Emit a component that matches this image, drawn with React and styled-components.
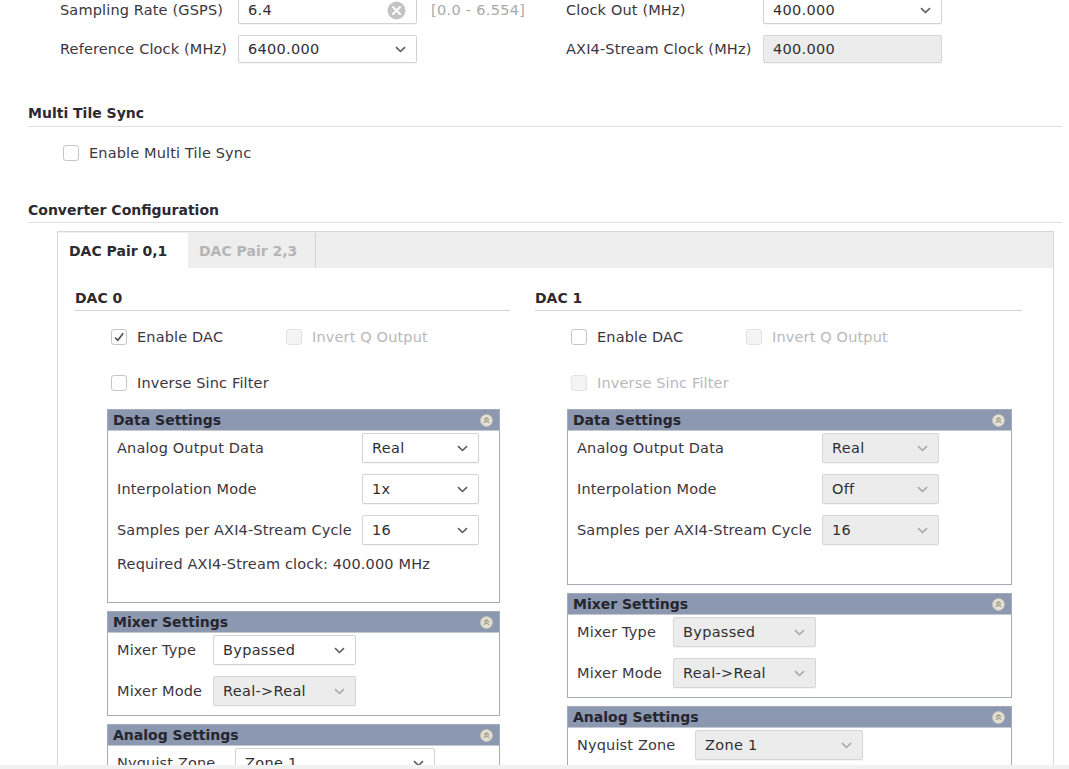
import styled, { createGlobalStyle } from "styled-components";

const Global = createGlobalStyle`
  body {
    margin: 0;
    background: #fff;
    font-family: "DejaVu Sans", "Liberation Sans", sans-serif;
    font-size: 14.5px;
    color: #3b3640;
    overflow: hidden;
  }
`

const Page = styled.div`
  width: 1069px;
  height: 769px;
  overflow: hidden;
  padding: 0 7px 0 28px;
  box-sizing: border-box;
`

const TopArea = styled.div`
  display: flex;
  margin-top: -4px;
  padding-left: 32px;
`

const FieldGrid = styled.div`
  display: grid;
  grid-template-columns: ${p => p.$labelW}px 179px auto;
  grid-auto-rows: 28px;
  row-gap: 11px;
  align-items: center;
  width: ${p => p.$w}px;
`

const Label = styled.span`
  letter-spacing: 0.15px;
  white-space: nowrap;
  color: ${p => (p.$disabled ? "#b9b9b9" : "#3b3640")};
`

const Range = styled.span`
  color: #a9a9a9;
  margin-left: 14px;
  letter-spacing: 0.3px;
`

const Field = styled.div`
  height: ${p => p.$h || 30}px;
  width: ${p => (p.$w ? `${p.$w}px` : "auto")};
  box-sizing: border-box;
  display: flex;
  align-items: center;
  justify-content: space-between;
  padding: 0 10px 0 9px;
  border: 1px solid ${p => (p.$disabled ? "#d6d6d6" : "#d2d2d2")};
  border-radius: 2px;
  background: ${p => (p.$disabled ? "#ececec" : "#fff")};
  color: #2f2f33;
  letter-spacing: 0.3px;
  box-shadow: 0 1px 0 rgba(0, 0, 0, 0.04);
`

const SectionTitle = styled.div`
  font-weight: bold;
  font-size: 14px;
  line-height: 18px;
  color: #2c2a30;
  padding-bottom: ${p => p.$pb}px;
  margin-top: ${p => p.$mt}px;
  border-bottom: 1px solid #dedede;
`

const CheckRow = styled.div`
  display: flex;
  align-items: center;
  margin-top: ${p => p.$mt}px;
  padding-left: ${p => p.$pl}px;
  height: 16px;
`

const CheckItem = styled.label`
  display: flex;
  align-items: center;
  gap: 10px;
  width: ${p => (p.$w ? `${p.$w}px` : "auto")};
  color: ${p => (p.$disabled ? "#b9b9b9" : "#3b3640")};
  letter-spacing: 0.15px;
  white-space: nowrap;
`

const Box = styled.span`
  width: 16px;
  height: 16px;
  box-sizing: border-box;
  border: 1px solid ${p => (p.$disabled ? "#e2e2e2" : "#c6c6c6")};
  border-radius: 3px;
  background: ${p => (p.$disabled ? "#f4f4f4" : "#fff")};
  display: flex;
  align-items: center;
  justify-content: center;
`

const Tabs = styled.div`
  margin: 8px 0 0 29px;
  width: 997px;
  border: 1px solid #d6d6d6;
  border-bottom: none;
  box-sizing: border-box;
`

const TabBar = styled.div`
  display: flex;
  height: 36px;
  background: #eeeeee;
`

const Tab = styled.div`
  width: ${p => p.$w}px;
  display: flex;
  align-items: center;
  padding-left: 11px;
  box-sizing: border-box;
  font-weight: bold;
  font-size: 14px;
  margin-top: 1px;
  background: ${p => (p.$active ? "#fff" : "transparent")};
  color: ${p => (p.$active ? "#2c2a30" : "#b5b5b5")};
  border-right: ${p => (p.$active ? "none" : "1px solid #d3d3d3")};
`

const TabBody = styled.div`
  display: grid;
  grid-template-columns: 460px 487px;
  padding: 21px 0 0 17px;
  height: 520px;
`

const Column = styled.div`
  display: flex;
  flex-direction: column;
`

const DacTitle = styled.div`
  font-weight: bold;
  font-size: 14px;
  line-height: 18px;
  color: #2c2a30;
  padding-bottom: 3px;
  border-bottom: 1px solid #d0d0d0;
  width: ${p => p.$w}px;
`

const Panel = styled.div`
  margin: ${p => p.$mt}px 0 0 32px;
  width: ${p => p.$w}px;
  border: 1px solid #a3aabb;
  box-sizing: border-box;
`

const PanelHead = styled.div`
  height: 20px;
  background: #8c97b0;
  display: flex;
  align-items: center;
  justify-content: space-between;
  padding: 0 6px 0 5px;
  font-weight: bold;
  font-size: 14px;
  color: #25252e;
`

const PanelBody = styled.div`
  padding: 2px 9px ${p => p.$pb}px;
  display: flex;
  flex-direction: column;
  gap: 11px;
  border-top: 1px solid #c4c8d3;
`

const Row = styled.div`
  display: grid;
  grid-template-columns: ${p => p.$labelW}px ${p => p.$selW}px;
  align-items: center;
`

const Note = styled.div`
  height: 16px;
  line-height: 16px;
  letter-spacing: 0.15px;
  color: #3b3640;
`

const BottomEdge = styled.div`
  position: fixed;
  left: 0;
  right: 0;
  bottom: 0;
  height: 4px;
  background: #f1f1f1;
`

function Chevron({ light }) {
  return (
    <svg width="11" height="7" viewBox="0 0 11 7">
      <path d="M1 1.2 L5.5 5.5 L10 1.2" fill="none" stroke={light ? "#a8a8a8" : "#5c5c5c"} strokeWidth="1.6" />
    </svg>
  )
}

function ClearIcon() {
  return (
    <svg width="19" height="19" viewBox="0 0 19 19">
      <circle cx="9.5" cy="9.5" r="9" fill="#c3c3c3" />
      <path d="M6 6 L13 13 M13 6 L6 13" stroke="#fff" strokeWidth="2" strokeLinecap="round" />
    </svg>
  )
}

function CollapseIcon() {
  return (
    <svg width="13" height="13" viewBox="0 0 13 13">
      <circle cx="6.5" cy="6.5" r="6" fill="#e3e0d2" stroke="#c9c6b8" strokeWidth="0.8" />
      <path d="M4 6 L6.5 3.8 L9 6 M4 8.8 L6.5 6.6 L9 8.8" fill="none" stroke="#9a978a" strokeWidth="1.1" />
    </svg>
  )
}

function Select({ value, w, h, disabled }) {
  return (
    <Field $w={w} $h={h} $disabled={disabled}>
      <span>{value}</span>
      <Chevron light={disabled} />
    </Field>
  )
}

function Check({ label, checked, disabled, w }) {
  return (
    <CheckItem $disabled={disabled} $w={w}>
      <Box $disabled={disabled}>
        {checked && (
          <svg width="12" height="12" viewBox="0 0 12 12">
            <path d="M2 6.5 L4.8 9.3 L10.2 2.2" fill="none" stroke="#4a4a4a" strokeWidth="1.5" />
          </svg>
        )}
      </Box>
      {label}
    </CheckItem>
  )
}

function SettingsPanel({ title, w, mt, pb, children }) {
  return (
    <Panel $w={w} $mt={mt}>
      <PanelHead>
        {title}
        <CollapseIcon />
      </PanelHead>
      <PanelBody $pb={pb}>{children}</PanelBody>
    </Panel>
  )
}

function DacColumn({ name, enabled, titleW, panelW, dataPb, interp, analogW }) {
  const off = !enabled
  return (
    <Column>
      <DacTitle $w={titleW}>{name}</DacTitle>
      <CheckRow $mt={18} $pl={36}>
        <Check label="Enable DAC" checked={enabled} w={175} />
        <Check label="Invert Q Output" disabled />
      </CheckRow>
      <CheckRow $mt={30} $pl={36}>
        <Check label="Inverse Sinc Filter" disabled={off} />
      </CheckRow>
      <SettingsPanel title="Data Settings" w={panelW} mt={18} pb={dataPb}>
        <Row $labelW={245} $selW={117}>
          <Label>Analog Output Data</Label>
          <Select value="Real" disabled={off} />
        </Row>
        <Row $labelW={245} $selW={117}>
          <Label>Interpolation Mode</Label>
          <Select value={interp} disabled={off} />
        </Row>
        <Row $labelW={245} $selW={117}>
          <Label>Samples per AXI4-Stream Cycle</Label>
          <Select value="16" disabled={off} />
        </Row>
        {enabled && <Note>Required AXI4-Stream clock: 400.000 MHz</Note>}
      </SettingsPanel>
      <SettingsPanel title="Mixer Settings" w={panelW} mt={8} pb={9}>
        <Row $labelW={96} $selW={143}>
          <Label>Mixer Type</Label>
          <Select value="Bypassed" disabled={off} />
        </Row>
        <Row $labelW={96} $selW={143}>
          <Label>Mixer Mode</Label>
          <Select value="Real->Real" disabled />
        </Row>
      </SettingsPanel>
      <SettingsPanel title="Analog Settings" w={panelW} mt={8} pb={9}>
        <Row $labelW={118} $selW={analogW}>
          <Label>Nyquist Zone</Label>
          <Select value="Zone 1" disabled={off} />
        </Row>
      </SettingsPanel>
    </Column>
  )
}

export default function App() {
  return (
    <Page>
      <Global />
      <TopArea>
        <FieldGrid $labelW={178} $w={506}>
          <Label>Sampling Rate (GSPS)</Label>
          <Field $h={28}>
            <span>6.4</span>
            <ClearIcon />
          </Field>
          <Range>[0.0 - 6.554]</Range>
          <Label>Reference Clock (MHz)</Label>
          <Select value="6400.000" h={28} />
          <span />
        </FieldGrid>
        <FieldGrid $labelW={197} $w={400}>
          <Label>Clock Out (MHz)</Label>
          <Select value="400.000" h={28} />
          <span />
          <Label>AXI4-Stream Clock (MHz)</Label>
          <Field $h={28} $disabled>
            <span>400.000</span>
          </Field>
          <span />
        </FieldGrid>
      </TopArea>

      <SectionTitle $mt={41} $pb={4}>Multi Tile Sync</SectionTitle>
      <CheckRow $mt={18} $pl={35}>
        <Check label="Enable Multi Tile Sync" />
      </CheckRow>

      <SectionTitle $mt={40} $pb={3}>Converter Configuration</SectionTitle>
      <Tabs>
        <TabBar>
          <Tab $active $w={130}>DAC Pair 0,1</Tab>
          <Tab $w={128}>DAC Pair 2,3</Tab>
        </TabBar>
        <TabBody>
          <DacColumn name="DAC 0" enabled titleW={435} panelW={393} dataPb={30} interp="1x" analogW={200} />
          <DacColumn name="DAC 1" titleW={487} panelW={445} dataPb={39} interp="Off" analogW={168} />
        </TabBody>
      </Tabs>
      <BottomEdge />
    </Page>
  )
}
